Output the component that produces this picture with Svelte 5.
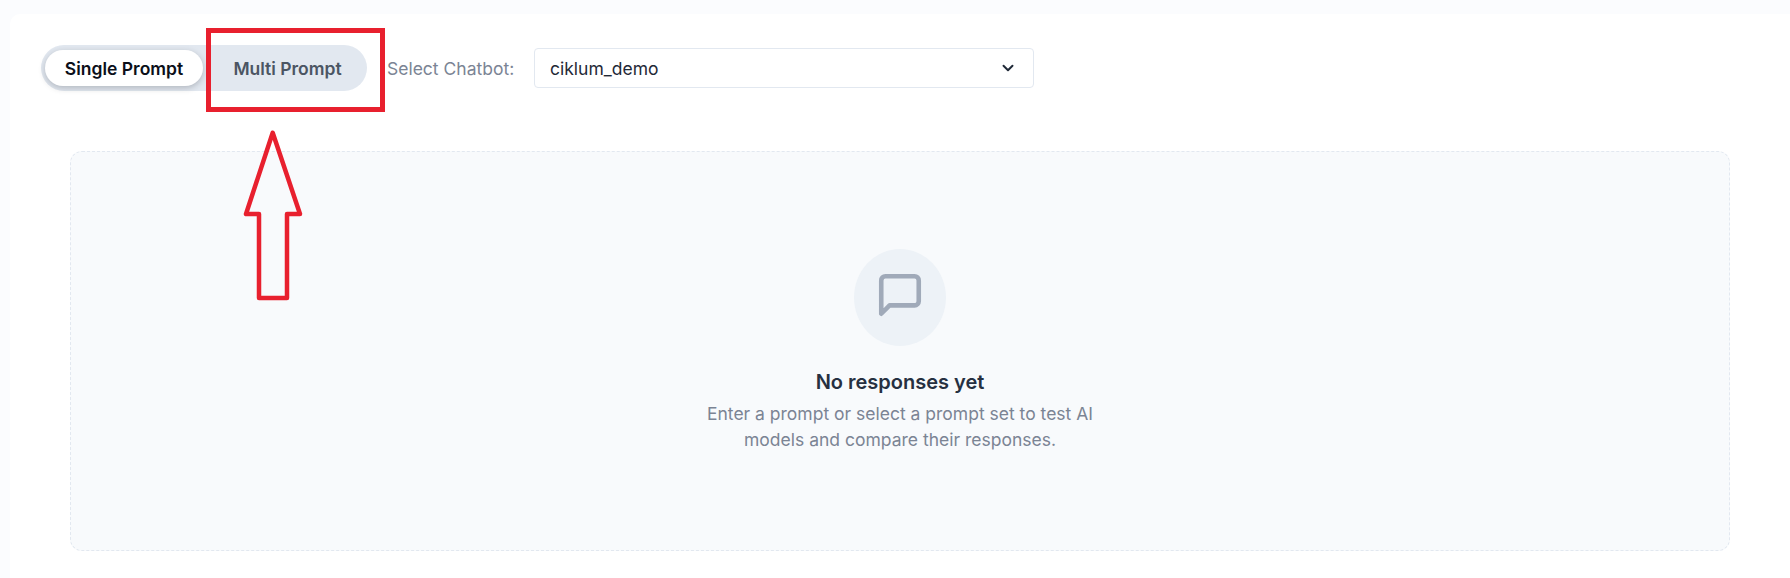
<script>
  const modes = [
    { label: 'Single Prompt', active: true },
    { label: 'Multi Prompt', active: false }
  ];
</script>

<div class="page">
  <main class="card">
    <div class="toolbar">
      <div class="toggle">
        {#each modes as mode}
          <span class="tab" class:active={mode.active}>{mode.label}</span>
        {/each}
      </div>
      <span class="label">Select Chatbot:</span>
      <div class="select">
        <span>ciklum_demo</span>
        <svg class="chev" viewBox="0 0 24 24" fill="none" stroke="#1f2937" stroke-width="2.6" stroke-linecap="round" stroke-linejoin="round"><path d="M6 9l6 6 6-6" /></svg>
      </div>
    </div>

    <section class="empty">
      <div class="circle">
        <svg class="bubble" viewBox="0 0 24 24" fill="none" stroke="#a0aab9" stroke-width="2.2" stroke-linecap="round" stroke-linejoin="round"><path d="M21 15a2 2 0 0 1-2 2H7l-4 4V5a2 2 0 0 1 2-2h14a2 2 0 0 1 2 2z" /></svg>
      </div>
      <h2>No responses yet</h2>
      <p>Enter a prompt or select a prompt set to test AI<br />models and compare their responses.</p>
    </section>
  </main>

  <div class="redbox"></div>
  <svg class="arrow" viewBox="0 0 70 180" fill="none" stroke="#e8202e" stroke-width="4.5" stroke-linejoin="round">
    <path d="M32.7 4.7 L6 86 H19 V170 H47 V86 H60 Z" />
  </svg>
</div>

<style>
  :global(body) {
    margin: 0;
    background: #fbfcfe;
  }
  .page {
    position: relative;
    width: 1790px;
    height: 578px;
    overflow: hidden;
    padding: 14px 0 0 10px;
    box-sizing: border-box;
    font-family: Inter, "Liberation Sans", sans-serif;
  }
  .card {
    background: #fff;
    height: 564px;
    border-top-left-radius: 10px;
    padding: 31px 60px 0 31px;
    box-sizing: border-box;
  }
  .toolbar {
    display: flex;
    align-items: center;
    height: 46px;
  }
  .toggle {
    display: flex;
    align-items: center;
    width: 326px;
    height: 46px;
    padding: 0 4px;
    box-sizing: border-box;
    background: #e2e8f0;
    border-radius: 23px;
    gap: 2px;
  }
  .tab {
    width: 158px;
    height: 36px;
    padding-left: 7px;
    box-sizing: border-box;
    display: flex;
    align-items: center;
    justify-content: center;
    border-radius: 18px;
    font-size: 17.5px;
    font-weight: 600;
    color: #4b5563;
  }
  .tab.active {
    padding-left: 0;
    background: #fff;
    color: #0b0f19;
    box-shadow: 0 2px 6px rgba(30, 35, 45, 0.25);
  }
  .label {
    margin-left: 20px;
    font-size: 17.5px;
    color: #7b8494;
    width: 147px;
  }
  .select {
    width: 500px;
    height: 40px;
    padding: 0 16px 0 15px;
    box-sizing: border-box;
    display: flex;
    align-items: center;
    justify-content: space-between;
    background: #fff;
    border: 1px solid #e2e8f0;
    border-radius: 4px;
    font-size: 17.5px;
    color: #1f2937;
  }
  .chev {
    width: 18px;
    height: 18px;
  }
  .empty {
    margin: 60px 0 0 29px;
    height: 400px;
    box-sizing: border-box;
    padding-top: 97px;
    display: flex;
    flex-direction: column;
    align-items: center;
    background: #f8fafc;
    border: 1px dashed #e2e8f0;
    border-radius: 12px;
  }
  .circle {
    width: 92px;
    height: 97px;
    border-radius: 50%;
    background: #edf2f7;
    display: flex;
    align-items: center;
    justify-content: center;
  }
  .bubble {
    width: 50px;
    height: 50px;
    margin-top: -6px;
  }
  h2 {
    margin: 22px 0 0;
    font-size: 20px;
    line-height: 28px;
    font-weight: 600;
    color: #263041;
  }
  p {
    margin: 5px 0 0;
    font-size: 17.5px;
    line-height: 26px;
    text-align: center;
    color: #7b8494;
  }
  .redbox {
    position: absolute;
    left: 206px;
    top: 28px;
    width: 179px;
    height: 84px;
    box-sizing: border-box;
    border: 5px solid #e8202e;
  }
  .arrow {
    position: absolute;
    left: 240px;
    top: 128px;
    width: 70px;
    height: 180px;
  }
</style>
